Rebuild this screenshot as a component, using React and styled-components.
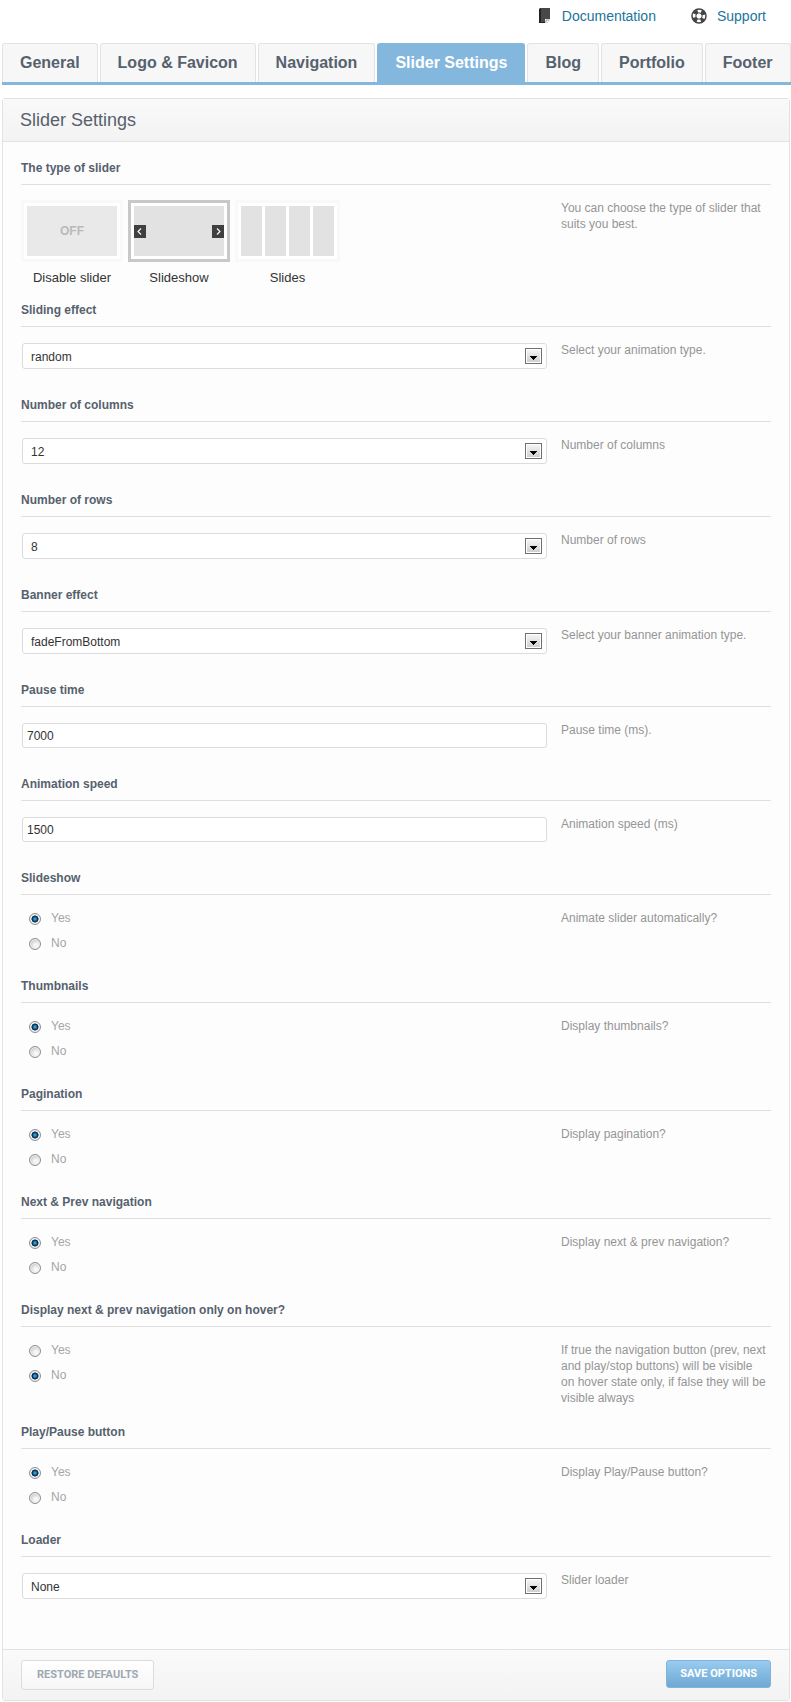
import { useState } from 'react'
import styled, { createGlobalStyle } from 'styled-components'

const TABS = ['General', 'Logo & Favicon', 'Navigation', 'Slider Settings', 'Blog', 'Portfolio', 'Footer']

export default function App () {
	const [tab, setTab] = useState('Slider Settings')

	return (
		<Page>
			<GlobalStyle />
			<HelpLinks aria-label='Help'>
				<a href='#documentation'><DocumentIcon />Documentation</a>
				<a href='#support'><SupportIcon />Support</a>
			</HelpLinks>
			<Tabs role='tablist'>
				{TABS.map(name => (
					<Tab key={name} role='tab' aria-selected={name === tab} onClick={() => setTab(name)}>
						{name}
					</Tab>
				))}
			</Tabs>
			<Panel onSubmit={e => e.preventDefault()}>
				<PanelTitle>Slider Settings</PanelTitle>
				<Options>
					<SliderType />
					<SelectOption id='effect' title='Sliding effect' hint='Select your animation type.'
						options={['random', 'fade', 'fold']} />
					<SelectOption id='columns' title='Number of columns' hint='Number of columns'
						options={['12', '10', '8']} />
					<SelectOption id='rows' title='Number of rows' hint='Number of rows'
						options={['8', '6', '4']} />
					<SelectOption id='banner' title='Banner effect' hint='Select your banner animation type.'
						options={['fadeFromBottom', 'fadeFromTop']} />
					<TextOption id='pause' title='Pause time' hint='Pause time (ms).' value='7000' />
					<TextOption id='speed' title='Animation speed' hint='Animation speed (ms)' value='1500' />
					<YesNoOption id='slideshow' title='Slideshow' hint='Animate slider automatically?' value='Yes' />
					<YesNoOption id='thumbnails' title='Thumbnails' hint='Display thumbnails?' value='Yes' />
					<YesNoOption id='pagination' title='Pagination' hint='Display pagination?' value='Yes' />
					<YesNoOption id='nextprev' title='Next & Prev navigation' hint='Display next & prev navigation?'
						value='Yes' />
					<YesNoOption id='hover' title='Display next & prev navigation only on hover?'
						hint='If true the navigation button (prev, next and play/stop buttons) will be visible on hover state only, if false they will be visible always'
						value='No' />
					<YesNoOption id='play' title='Play/Pause button' hint='Display Play/Pause button?' value='Yes' />
					<SelectOption id='loader' title='Loader' hint='Slider loader' options={['None', 'Pie', 'Bar']} />
				</Options>
				<PanelFooter>
					<RestoreButton type='reset'>RESTORE DEFAULTS</RestoreButton>
					<SaveButton type='submit'>SAVE OPTIONS</SaveButton>
				</PanelFooter>
			</Panel>
		</Page>
	)
}

function Option ({ id, title, hint, children }) {
	return (
		<section>
			<OptionTitle id={`${id}-title`}>{title}</OptionTitle>
			<OptionBody>
				{children}
				<Hint>{hint}</Hint>
			</OptionBody>
		</section>
	)
}

function SliderType () {
	return (
		<Option id='type' title='The type of slider' hint='You can choose the type of slider that suits you best.'>
			<Thumbs role='radiogroup' aria-labelledby='type-title'>
				<ThumbLabel>
					<input type='radio' name='type' value='off' />
					<Thumb><OffPreview>OFF</OffPreview></Thumb>
					Disable slider
				</ThumbLabel>
				<ThumbLabel>
					<input type='radio' name='type' value='slideshow' defaultChecked />
					<Thumb>
						<SlideshowPreview>
							<Arrow d='M7 4 L4 7 L7 10' />
							<Arrow d='M5 4 L8 7 L5 10' />
						</SlideshowPreview>
					</Thumb>
					Slideshow
				</ThumbLabel>
				<ThumbLabel>
					<input type='radio' name='type' value='slides' />
					<Thumb><SlidesPreview><i /><i /><i /><i /></SlidesPreview></Thumb>
					Slides
				</ThumbLabel>
			</Thumbs>
		</Option>
	)
}

function SelectOption ({ id, title, hint, options }) {
	return (
		<Option id={id} title={title} hint={hint}>
			<SelectBox>
				<select id={id} aria-labelledby={`${id}-title`}>
					{options.map(option => <option key={option}>{option}</option>)}
				</select>
				<DropArrow />
			</SelectBox>
		</Option>
	)
}

function TextOption ({ id, title, hint, value }) {
	return (
		<Option id={id} title={title} hint={hint}>
			<TextInput id={id} type='text' defaultValue={value} aria-labelledby={`${id}-title`} />
		</Option>
	)
}

function YesNoOption ({ id, title, hint, value }) {
	return (
		<Option id={id} title={title} hint={hint}>
			<Radios role='radiogroup' aria-labelledby={`${id}-title`}>
				{['Yes', 'No'].map(answer => (
					<RadioLabel key={answer}>
						<Radio type='radio' name={id} value={answer} defaultChecked={answer === value} />
						{answer}
					</RadioLabel>
				))}
			</Radios>
		</Option>
	)
}

function Arrow ({ d }) {
	return (
		<svg width='12' height='13' aria-hidden='true'>
			<rect width='12' height='13' fill='#404040' />
			<path d={d} transform='translate(0 -0.5)' fill='none' stroke='#fff' strokeWidth='1.1' />
		</svg>
	)
}

function DropArrow () {
	return (
		<svg width='17' height='16' aria-hidden='true'>
			<defs>
				<linearGradient id='drop' x2='0' y2='1'>
					<stop offset='0' stopColor='#f4f4f4' />
					<stop offset='1' stopColor='#cfcfcf' />
				</linearGradient>
			</defs>
			<rect x='0.5' y='0.5' width='16' height='15' fill='#fff' stroke='#707070' />
			<rect x='2' y='2' width='13' height='12' fill='url(#drop)' />
			<path d='M5 8h7v1h-1v1h-1v1h-1v1h-1v-1h-1v-1h-1v-1h-1z' fill='#000' />
		</svg>
	)
}

function DocumentIcon () {
	return (
		<svg width='13' height='16' viewBox='0 0 13 16' aria-hidden='true'>
			<path d='M2 0h9v11l-3 4H0V1z' fill='#484848' />
			<path d='M0 1l2-1v13l-2 2z' fill='#222' />
			<path d='M0 14h6v1H0z' fill='#222' />
			<path d='M6 15v-4h5l-3 4z' fill='#fff' />
			<path d='M7 15v-3h3' fill='none' stroke='#999' />
		</svg>
	)
}

function SupportIcon () {
	return (
		<svg width='16' height='16' viewBox='0 0 16 16' aria-hidden='true'>
			<circle cx='8' cy='8' r='5' fill='none' stroke='#444' strokeWidth='4' strokeDasharray='4.4 3.454'
				strokeDashoffset='2.2' transform='rotate(45 8 8)' />
			<circle cx='8' cy='8' r='7' fill='none' stroke='#444' strokeWidth='1.5' />
			<circle cx='8' cy='8' r='3.2' fill='none' stroke='#444' />
		</svg>
	)
}

const GlobalStyle = createGlobalStyle`
	* { box-sizing: border-box }
	body {
		margin: 0;
		background: #fff;
		font: 12px/16px "Liberation Sans", Arial, sans-serif;
		color: #333;
	}
	button, input, select { font: inherit }
`

const Page = styled.main`
	padding: 0 0 1px 2px;
`

const HelpLinks = styled.nav`
	display: flex;
	justify-content: flex-end;
	gap: 35px;
	height: 43px;
	padding: 8px 25px 0 0;
	a {
		display: flex;
		height: 16px;
		gap: 10px;
		font-size: 14px;
		color: #21759b;
		text-decoration: none;
	}
`

const Tabs = styled.div`
	display: flex;
	gap: 2px;
	border-bottom: 3px solid #83b7de;
`

const Tab = styled.button`
	height: 39px;
	padding: 0 17px;
	border: 1px solid #e3e3e3;
	border-bottom: 0;
	border-radius: 3px 3px 0 0;
	background: #f7f7f7;
	color: #56616d;
	font-size: 16px;
	font-weight: 700;
	white-space: nowrap;
	cursor: pointer;
	&[aria-selected='true'] {
		border-color: #83b7de;
		background: #83b7de;
		color: #fff;
	}
`

const Panel = styled.form`
	margin: 13px 1px 0 0;
	border: 1px solid #e3e3e3;
	border-radius: 3px;
	background: #fdfdfd;
`

const PanelTitle = styled.h1`
	margin: 0;
	padding: 0 17px;
	border-bottom: 1px solid #e3e3e3;
	background: linear-gradient(#f9f9f9, #f3f3f3);
	color: #56616d;
	font-size: 18px;
	font-weight: 400;
	line-height: 42px;
`

const Options = styled.div`
	padding: 18px 18px 22px;
`

const OptionTitle = styled.h2`
	margin: 0;
	padding-bottom: 8px;
	border-bottom: 1px solid #dfdfdf;
	color: #56616d;
	font-size: 12px;
	font-weight: 700;
`

const OptionBody = styled.div`
	display: grid;
	grid-template-columns: 1fr 210px;
	gap: 14px;
	align-items: start;
	padding: 15px 0 18px;
`

const Hint = styled.p`
	margin: 0;
	padding-right: 4px;
	color: #959595;
`

const Thumbs = styled.div`
	display: flex;
	gap: 5px;
`

const Thumb = styled.span`
	display: block;
	margin-bottom: 9px;
	padding: 3px;
	border: 3px solid #f9f9f9;
	background: #fff;
`

const ThumbLabel = styled.label`
	font-size: 13px;
	line-height: 13px;
	text-align: center;
	cursor: pointer;
	input {
		position: absolute;
		opacity: 0;
	}
	input:checked + ${Thumb} { border-color: #c8c8c8 }
`

const Preview = styled.span`
	display: flex;
	align-items: center;
	width: 90px;
	height: 50px;
	background: #e2e2e2;
`

const OffPreview = styled(Preview)`
	justify-content: center;
	background: #e9e9e9;
	color: #b9b9b9;
	font-size: 12px;
	font-weight: 700;
`

const SlideshowPreview = styled(Preview)`
	justify-content: space-between;
`

const SlidesPreview = styled(Preview)`
	gap: 3px;
	width: 93px;
	background: none;
	i {
		flex: 1;
		height: 100%;
		background: #e2e2e2;
	}
`

const SelectBox = styled.div`
	position: relative;
	margin: 1px 0 10px 1px;
	select {
		display: block;
		width: 100%;
		height: 26px;
		padding: 2px 24px 0 8px;
		border: 1px solid #dcdcdc;
		border-radius: 3px;
		background: #fff;
		color: #333;
		appearance: none;
	}
	svg {
		position: absolute;
		top: 5px;
		right: 5px;
		pointer-events: none;
	}
`

const TextInput = styled.input`
	height: 25px;
	margin: 1px 0 10px 1px;
	padding: 0 4px;
	border: 1px solid #dcdcdc;
	border-radius: 3px;
	background: #fff;
	color: #333;
`

const Radios = styled.div`
	display: grid;
	gap: 11px;
	justify-content: start;
	padding: 1px 8px 10px;
`

const RadioLabel = styled.label`
	display: flex;
	align-items: flex-end;
	gap: 10px;
	color: #a5a5a5;
	line-height: 14px;
`

const Radio = styled.input`
	width: 12px;
	height: 12px;
	margin: 0;
	border: 1px solid #8e8f8f;
	border-radius: 50%;
	background: radial-gradient(circle at 60% 65%, #f6f6f6 20%, #c4c6c9 75%);
	box-shadow: inset 0 0 0 1px #f2f2f2;
	appearance: none;
	&:checked {
		background: radial-gradient(circle, #4fb4e0 0, #1a7fb5 20%, #0c2f52 38%, #0c2f52 46%, #e4e8ec 54%);
	}
`

const PanelFooter = styled.footer`
	display: flex;
	justify-content: space-between;
	align-items: flex-start;
	padding: 10px 18px;
	border-top: 1px solid #e3e3e3;
	background: linear-gradient(#fafafa, #f3f3f3);
`

const Button = styled.button`
	border-radius: 3px;
	font-family: Roboto, sans-serif;
	font-size: 11px;
	font-weight: 700;
	cursor: pointer;
`

const RestoreButton = styled(Button)`
	height: 30px;
	padding: 0 15px;
	border: 1px solid #dcdcdc;
	background: linear-gradient(#fff, #f6f6f6);
	color: #a0a8b0;
`

const SaveButton = styled(Button)`
	height: 28px;
	padding: 0 13px;
	border: 1px solid #7fb5dd;
	background: linear-gradient(#98cbef, #6fa8d3);
	color: #fff;
`
